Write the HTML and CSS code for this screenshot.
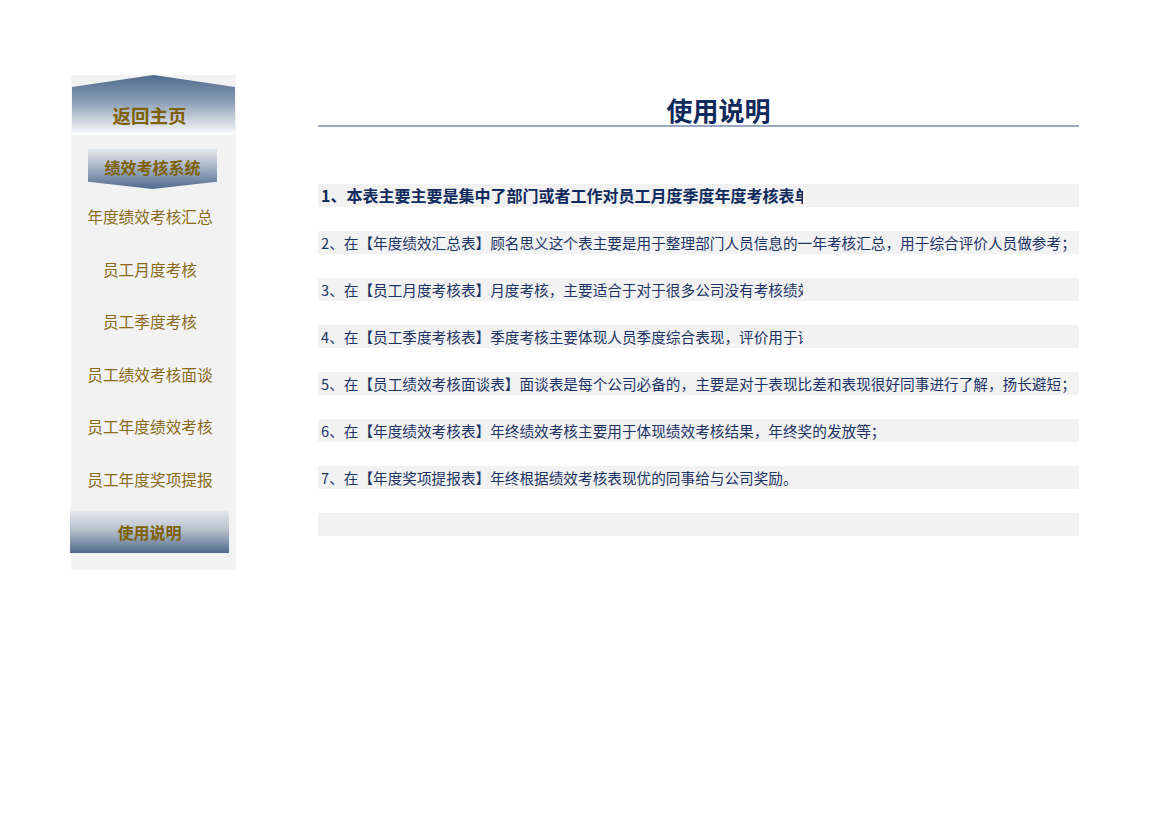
FILE: index.html
```html
<!DOCTYPE html>
<html lang="zh-CN">
<head>
<meta charset="utf-8">
<title>使用说明</title>
<link rel="stylesheet" href="styles.css">
</head>
<body>
<div class="page">
  <aside class="sidebar">
    <div class="home"><span>返回主页</span></div>
    <div class="system"><span>绩效考核系统</span></div>
    <ul class="menu">
      <li>年度绩效考核汇总</li>
      <li>员工月度考核</li>
      <li>员工季度考核</li>
      <li>员工绩效考核面谈</li>
      <li>员工年度绩效考核</li>
      <li>员工年度奖项提报</li>
    </ul>
    <div class="current">使用说明</div>
  </aside>
  <main class="main">
    <h1 class="title">使用说明</h1>
    <div class="rows">
      <div class="row bold"><span class="clip">1、本表主要主要是集中了部门或者工作对员工月度季度年度考核表单的汇总与使用说明</span></div>
      <div class="row"><span>2、在【年度绩效汇总表】顾名思义这个表主要是用于整理部门人员信息的一年考核汇总，用于综合评价人员做参考；</span></div>
      <div class="row"><span class="clip">3、在【员工月度考核表】月度考核，主要适合于对于很多公司没有考核绩效的情况使用；</span></div>
      <div class="row"><span class="clip">4、在【员工季度考核表】季度考核主要体现人员季度综合表现，评价用于评定季度奖金；</span></div>
      <div class="row"><span>5、在【员工绩效考核面谈表】面谈表是每个公司必备的，主要是对于表现比差和表现很好同事进行了解，扬长避短；</span></div>
      <div class="row"><span>6、在【年度绩效考核表】年终绩效考核主要用于体现绩效考核结果，年终奖的发放等；</span></div>
      <div class="row"><span>7、在【年度奖项提报表】年终根据绩效考核表现优的同事给与公司奖励。</span></div>
      <div class="row"></div>
    </div>
  </main>
</div>
</body>
</html>
```

FILE: styles.css
```css
* { box-sizing: border-box; }
html, body { margin: 0; padding: 0; background: #fff; }
body {
  font-family: "Noto Sans CJK SC", "Noto Sans", sans-serif;
}
.page {
  display: flex;
  align-items: flex-start;
  padding-top: 75px;
  padding-left: 71px;
}
.sidebar {
  width: 165px;
  background: #f2f2f2;
  padding-bottom: 17px;
  display: flex;
  flex-direction: column;
}
.home {
  margin-left: 1px;
  width: 163px;
  height: 60px;
  clip-path: polygon(0 12px, 50% 0, 100% 12px, 100% 100%, 0 100%);
  background: linear-gradient(#4f6a8c 0%, #8c9fb8 45%, #fdfdfe 100%);
  display: flex;
  justify-content: center;
  padding-top: 27px;
  padding-right: 8px;
  font-size: 18.5px;
  line-height: 26px;
  font-weight: bold;
  color: #7f6000;
}
.system {
  margin-top: 14px;
  margin-left: 17px;
  width: 129px;
  height: 40px;
  clip-path: polygon(0 0, 100% 0, 100% 82%, 50% 100%, 0 82%);
  background: linear-gradient(#e4e7ec 0%, #a8b5c6 45%, #4f6a8c 100%);
  text-align: center;
  font-size: 16px;
  line-height: 22px;
  padding-top: 7px;
  font-weight: bold;
  color: #7f6000;
}
.menu {
  list-style: none;
  margin: 2px 0 0 0;
  padding: 0;
}
.menu li {
  height: 52.5px;
  line-height: 52.5px;
  text-align: center;
  padding-right: 7px;
  font-size: 15.7px;
  color: #8a6a18;
}
.current {
  margin-top: 5px;
  margin-left: -1px;
  width: 159px;
  height: 42px;
  background: linear-gradient(#e6e8ec 0%, #b7c1ce 45%, #506a8b 100%);
  text-align: center;
  line-height: 42px;
  font-size: 16px;
  font-weight: bold;
  color: #7f6000;
}
.main {
  margin-left: 82px;
  width: 761px;
}
.title {
  margin: 0;
  padding-top: 20px;
  padding-left: 40px;
  height: 52px;
  line-height: 30px;
  text-align: center;
  font-size: 26px;
  font-weight: bold;
  color: #0f2a5c;
  border-bottom: 2px solid #97a8c3;
}
.rows {
  margin-top: 57px;
  display: flex;
  flex-direction: column;
  gap: 24px;
}
.row {
  height: 23px;
  background: #f2f2f2;
  padding-left: 3px;
  font-size: 14.65px;
  line-height: 23px;
  color: #1c3366;
  white-space: nowrap;
}
.row span { display: block; }
.row .clip {
  width: 482px;
  overflow: hidden;
}
.row.bold {
  font-size: 16px;
  font-weight: bold;
  color: #102b5e;
}
```
